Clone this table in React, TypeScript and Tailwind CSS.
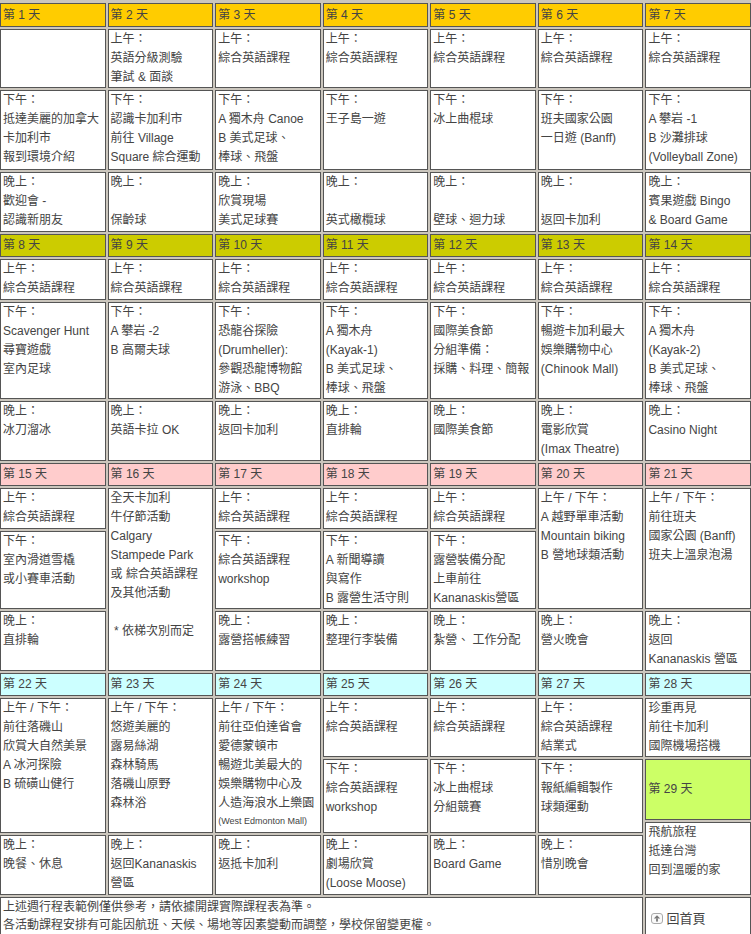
import React from 'react';

// one cell of the schedule: where it sits in the week grid and its text lines
type Slot = {
  col: number;
  at: 'am' | 'pm' | 'eve' | 'ampm' | 'all';
  lines: string[];
};

type Week = {
  start: number;
  headBg: string;
  rows: string;
  slots: Slot[];
};

const colCls = ['col-start-1', 'col-start-2', 'col-start-3', 'col-start-4', 'col-start-5', 'col-start-6', 'col-start-7'];

const rowCls: Record<Slot['at'], string> = {
  am: 'row-start-2',
  pm: 'row-start-3',
  eve: 'row-start-4',
  ampm: 'row-start-2 row-span-2',
  all: 'row-start-2 row-span-3',
};

const AM = '上午：';
const PM = '下午：';
const EVE = '晚上：';
const BOTH = '上午 / 下午：';
const ESL = '綜合英語課程';

const weeks: Week[] = [
  {
    start: 1,
    headBg: 'bg-[#ffcc00]',
    rows: 'grid-rows-[24px_59px_80px_60px]',
    slots: [
      { col: 1, at: 'am', lines: [] },
      { col: 1, at: 'pm', lines: [PM, '抵達美麗的加拿大', '卡加利市', '報到環境介紹'] },
      { col: 1, at: 'eve', lines: [EVE, '歡迎會 -', '認識新朋友'] },
      { col: 2, at: 'am', lines: [AM, '英語分級測驗', '筆試 & 面談'] },
      { col: 2, at: 'pm', lines: [PM, '認識卡加利市', '前往 Village', 'Square 綜合運動'] },
      { col: 2, at: 'eve', lines: [EVE, '', '保齡球'] },
      { col: 3, at: 'am', lines: [AM, ESL] },
      { col: 3, at: 'pm', lines: [PM, 'A 獨木舟 Canoe', 'B 美式足球、', '棒球、飛盤'] },
      { col: 3, at: 'eve', lines: [EVE, '欣賞現場', '美式足球賽'] },
      { col: 4, at: 'am', lines: [AM, ESL] },
      { col: 4, at: 'pm', lines: [PM, '王子島一遊'] },
      { col: 4, at: 'eve', lines: [EVE, '', '英式橄欖球'] },
      { col: 5, at: 'am', lines: [AM, ESL] },
      { col: 5, at: 'pm', lines: [PM, '冰上曲棍球'] },
      { col: 5, at: 'eve', lines: [EVE, '', '壁球、迴力球'] },
      { col: 6, at: 'am', lines: [AM, ESL] },
      { col: 6, at: 'pm', lines: [PM, '班夫國家公園', '一日遊 (Banff)'] },
      { col: 6, at: 'eve', lines: [EVE, '', '返回卡加利'] },
      { col: 7, at: 'am', lines: [AM, ESL] },
      { col: 7, at: 'pm', lines: [PM, 'A 攀岩 -1', 'B 沙灘排球', '(Volleyball Zone)'] },
      { col: 7, at: 'eve', lines: [EVE, '賓果遊戲 Bingo', '& Board Game'] },
    ],
  },
  {
    start: 8,
    headBg: 'bg-[#cccc00]',
    rows: 'grid-rows-[23px_41px_97px_60px]',
    slots: [
      { col: 1, at: 'am', lines: [AM, ESL] },
      { col: 1, at: 'pm', lines: [PM, 'Scavenger Hunt', '尋寶遊戲', '室內足球'] },
      { col: 1, at: 'eve', lines: [EVE, '冰刀溜冰'] },
      { col: 2, at: 'am', lines: [AM, ESL] },
      { col: 2, at: 'pm', lines: [PM, 'A 攀岩 -2', 'B 高爾夫球'] },
      { col: 2, at: 'eve', lines: [EVE, '英語卡拉 OK'] },
      { col: 3, at: 'am', lines: [AM, ESL] },
      { col: 3, at: 'pm', lines: [PM, '恐龍谷探險', '(Drumheller):', '參觀恐龍博物館', '游泳、BBQ'] },
      { col: 3, at: 'eve', lines: [EVE, '返回卡加利'] },
      { col: 4, at: 'am', lines: [AM, ESL] },
      { col: 4, at: 'pm', lines: [PM, 'A 獨木舟', '(Kayak-1)', 'B 美式足球、', '棒球、飛盤'] },
      { col: 4, at: 'eve', lines: [EVE, '直排輪'] },
      { col: 5, at: 'am', lines: [AM, ESL] },
      { col: 5, at: 'pm', lines: [PM, '國際美食節', '分組準備：', '採購、料理、簡報'] },
      { col: 5, at: 'eve', lines: [EVE, '國際美食節'] },
      { col: 6, at: 'am', lines: [AM, ESL] },
      { col: 6, at: 'pm', lines: [PM, '暢遊卡加利最大', '娛樂購物中心', '(Chinook Mall)'] },
      { col: 6, at: 'eve', lines: [EVE, '電影欣賞', '(Imax Theatre)'] },
      { col: 7, at: 'am', lines: [AM, ESL] },
      { col: 7, at: 'pm', lines: [PM, 'A 獨木舟', '(Kayak-2)', 'B 美式足球、', '棒球、飛盤'] },
      { col: 7, at: 'eve', lines: [EVE, 'Casino Night'] },
    ],
  },
  {
    start: 15,
    headBg: 'bg-[#ffcccc]',
    rows: 'grid-rows-[23px_41px_78px_60px]',
    slots: [
      { col: 1, at: 'am', lines: [AM, ESL] },
      { col: 1, at: 'pm', lines: [PM, '室內滑道雪橇', '或小賽車活動'] },
      { col: 1, at: 'eve', lines: [EVE, '直排輪'] },
      {
        col: 2,
        at: 'all',
        lines: ['全天卡加利', '牛仔節活動', 'Calgary', 'Stampede Park', '或 綜合英語課程', '及其他活動', '', '\u00a0* 依梯次別而定'],
      },
      { col: 3, at: 'am', lines: [AM, ESL] },
      { col: 3, at: 'pm', lines: [PM, ESL, 'workshop'] },
      { col: 3, at: 'eve', lines: [EVE, '露營搭帳練習'] },
      { col: 4, at: 'am', lines: [AM, ESL] },
      { col: 4, at: 'pm', lines: [PM, 'A 新聞導讀', '與寫作', 'B 露營生活守則'] },
      { col: 4, at: 'eve', lines: [EVE, '整理行李裝備'] },
      { col: 5, at: 'am', lines: [AM, ESL] },
      { col: 5, at: 'pm', lines: [PM, '露營裝備分配', '上車前往', 'Kananaskis營區'] },
      { col: 5, at: 'eve', lines: [EVE, '紮營、 工作分配'] },
      { col: 6, at: 'ampm', lines: [BOTH, 'A 越野單車活動', 'Mountain biking', 'B 營地球類活動'] },
      { col: 6, at: 'eve', lines: [EVE, '營火晚會'] },
      { col: 7, at: 'ampm', lines: [BOTH, '前往班夫', '國家公園 (Banff)', '班夫上溫泉泡湯'] },
      { col: 7, at: 'eve', lines: [EVE, '返回', 'Kananaskis 營區'] },
    ],
  },
  {
    start: 22,
    headBg: 'bg-[#ccffff]',
    rows: 'grid-rows-[23px_59px_74px_60px]',
    slots: [
      { col: 1, at: 'ampm', lines: [BOTH, '前往落磯山', '欣賞大自然美景', 'A 冰河探險', 'B 硫磺山健行'] },
      { col: 1, at: 'eve', lines: [EVE, '晚餐、休息'] },
      { col: 2, at: 'ampm', lines: [BOTH, '悠遊美麗的', '露易絲湖', '森林騎馬', '落磯山原野', '森林浴'] },
      { col: 2, at: 'eve', lines: [EVE, '返回Kananaskis', '營區'] },
      {
        col: 3,
        at: 'ampm',
        lines: [BOTH, '前往亞伯達省會', '愛德蒙頓市', '暢遊北美最大的', '娛樂購物中心及', '人造海浪水上樂園', '(West Edmonton Mall)'],
      },
      { col: 3, at: 'eve', lines: [EVE, '返抵卡加利'] },
      { col: 4, at: 'am', lines: [AM, ESL] },
      { col: 4, at: 'pm', lines: [PM, ESL, 'workshop'] },
      { col: 4, at: 'eve', lines: [EVE, '劇場欣賞', '(Loose Moose)'] },
      { col: 5, at: 'am', lines: [AM, ESL] },
      { col: 5, at: 'pm', lines: [PM, '冰上曲棍球', '分組競賽'] },
      { col: 5, at: 'eve', lines: [EVE, 'Board Game'] },
      { col: 6, at: 'am', lines: [AM, ESL, '結業式'] },
      { col: 6, at: 'pm', lines: [PM, '報紙編輯製作', '球類運動'] },
      { col: 6, at: 'eve', lines: [EVE, '惜別晚會'] },
    ],
  },
];

const box = 'border border-[#555] text-[#444] pl-[2px]';

const Lines: React.FC<{ lines: string[] }> = ({ lines }) => (
  <>
    {lines.map((l, i) =>
      l.startsWith('(West') ? (
        <div key={i} className="text-[9px] leading-[16px] whitespace-nowrap">
          {l}
        </div>
      ) : (
        <div key={i} className="whitespace-nowrap">
          {l === '' ? '\u00a0' : l}
        </div>
      )
    )}
  </>
);

const HomeIcon = () => (
  <svg width="12" height="11" viewBox="0 0 12 11" className="shrink-0">
    <rect x="0.5" y="0.5" width="11" height="10" rx="2.5" fill="#fafafa" stroke="#aaa" />
    <path d="M6 2.2 L9.2 5.6 L2.8 5.6 Z" fill="#777" />
    <rect x="5.1" y="5.4" width="1.8" height="3.2" fill="#777" />
  </svg>
);

export default function App() {
  return (
    <div className="w-[751px] h-[934px] overflow-hidden bg-[#cbc6bd] pt-[3px] flex flex-col gap-[2px] text-[12px] leading-[19px] font-['Liberation_Sans','Noto_Sans_CJK_TC',sans-serif]">
      {weeks.map((w) => (
        <div key={w.start} className={`grid grid-cols-7 gap-[2px] ${w.rows}`}>
          {colCls.map((c, i) => (
            <div key={'h' + i} className={`${c} row-start-1 ${box} ${w.headBg} flex items-center`}>
              第 {w.start + i} 天
            </div>
          ))}
          {w.slots.map((s, i) => (
            <div key={i} className={`${colCls[s.col - 1]} ${rowCls[s.at]} ${box} bg-white`}>
              <Lines lines={s.lines} />
            </div>
          ))}
          {w.start === 22 && (
            <div className="col-start-7 row-start-2 row-span-3 flex flex-col gap-[2px]">
              <div className={`${box} bg-white h-[59px]`}>
                <Lines lines={['珍重再見', '前往卡加利', '國際機場搭機']} />
              </div>
              <div className={`${box} bg-[#ccff66] h-[61px] flex items-center`}>第 29 天</div>
              <div className={`${box} bg-white flex-1`}>
                <Lines lines={['飛航旅程', '抵達台灣', '回到溫暖的家']} />
              </div>
            </div>
          )}
        </div>
      ))}
      <div className="grid grid-cols-7 gap-[2px] h-[42px] shrink-0">
        <div className={`col-span-6 ${box} bg-white leading-[18px]`}>
          <div>上述週行程表範例僅供參考，請依據開課實際課程表為準。</div>
          <div>各活動課程安排有可能因航班、天候、場地等因素變動而調整，學校保留變更權。</div>
        </div>
        <div className={`col-start-7 ${box} bg-white flex items-center gap-[3px] pl-[5px] text-[13px]`}>
          <HomeIcon />
          <span>回首頁</span>
        </div>
      </div>
    </div>
  );
}
